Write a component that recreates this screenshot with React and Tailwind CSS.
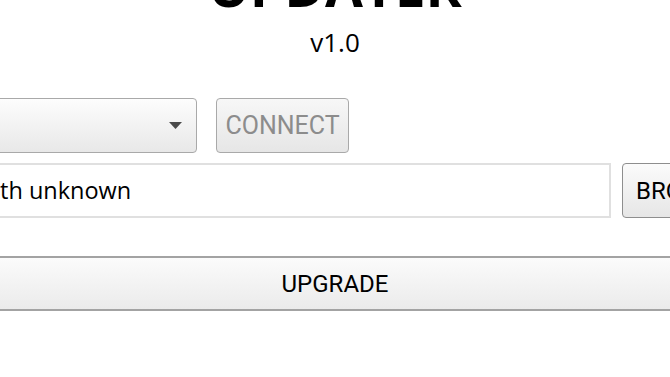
import React from 'react';

const Updater = () => {
  return (
    <div className="w-[670px] h-[377px] overflow-hidden bg-white text-black">
      <div className="w-[900px] ml-[-115px] flex flex-col items-center">
        <h1 className="mt-[-42px] h-[54px] text-[55px] leading-none font-bold font-['Open_Sans',sans-serif] whitespace-nowrap">
          UPDATER
        </h1>
        <div className="mt-[17px] text-[26px] leading-none font-['Open_Sans',sans-serif]">v1.0</div>
      </div>

      <div className="mt-[43px] ml-[-100px] flex items-stretch gap-[19px] h-[55px]">
        <div className="w-[297px] shrink-0 flex items-center justify-end pr-[14px] border border-[#a9a9a9] rounded-[4px] bg-gradient-to-b from-[#fdfdfd] to-[#e8e8e8]">
          <svg width="13" height="7" viewBox="0 0 13 7">
            <path d="M0 0 L13 0 L6.5 7 Z" fill="#4a4a4a" />
          </svg>
        </div>
        <button className="w-[133px] shrink-0 flex items-center justify-center border border-[#a9a9a9] rounded-[4px] bg-gradient-to-b from-[#f7f7f7] to-[#e6e6e6] text-[#8c8c8c] text-[25px] leading-none font-['Roboto',sans-serif]">
          CONNECT
        </button>
      </div>

      <div className="mt-[10px] ml-[-100px] flex items-stretch gap-[11px] h-[55px]">
        <div className="w-[711px] shrink-0 flex items-center pl-[100px] border-2 border-[#e0e0e0] bg-white text-[23.5px] leading-none font-['Open_Sans',sans-serif] whitespace-nowrap">
          <span className="ml-[-2px]">th unknown</span>
        </div>
        <button className="w-[140px] shrink-0 flex items-center pl-[13px] border border-[#8e8e8e] rounded-[4px] bg-gradient-to-b from-[#fbfbfb] to-[#e6e6e6] text-[24px] leading-none font-['Roboto',sans-serif]">
          BROWSE
        </button>
      </div>

      <button className="mt-[38px] ml-[-20px] w-[710px] h-[55px] flex items-center justify-center border-y-2 border-[#a3a3a3] bg-gradient-to-b from-[#fbfbfb] to-[#ebebeb] text-[24px] leading-none font-['Roboto',sans-serif]">
        UPGRADE
      </button>
    </div>
  );
};

export default function App() {
  return <Updater />;
}
